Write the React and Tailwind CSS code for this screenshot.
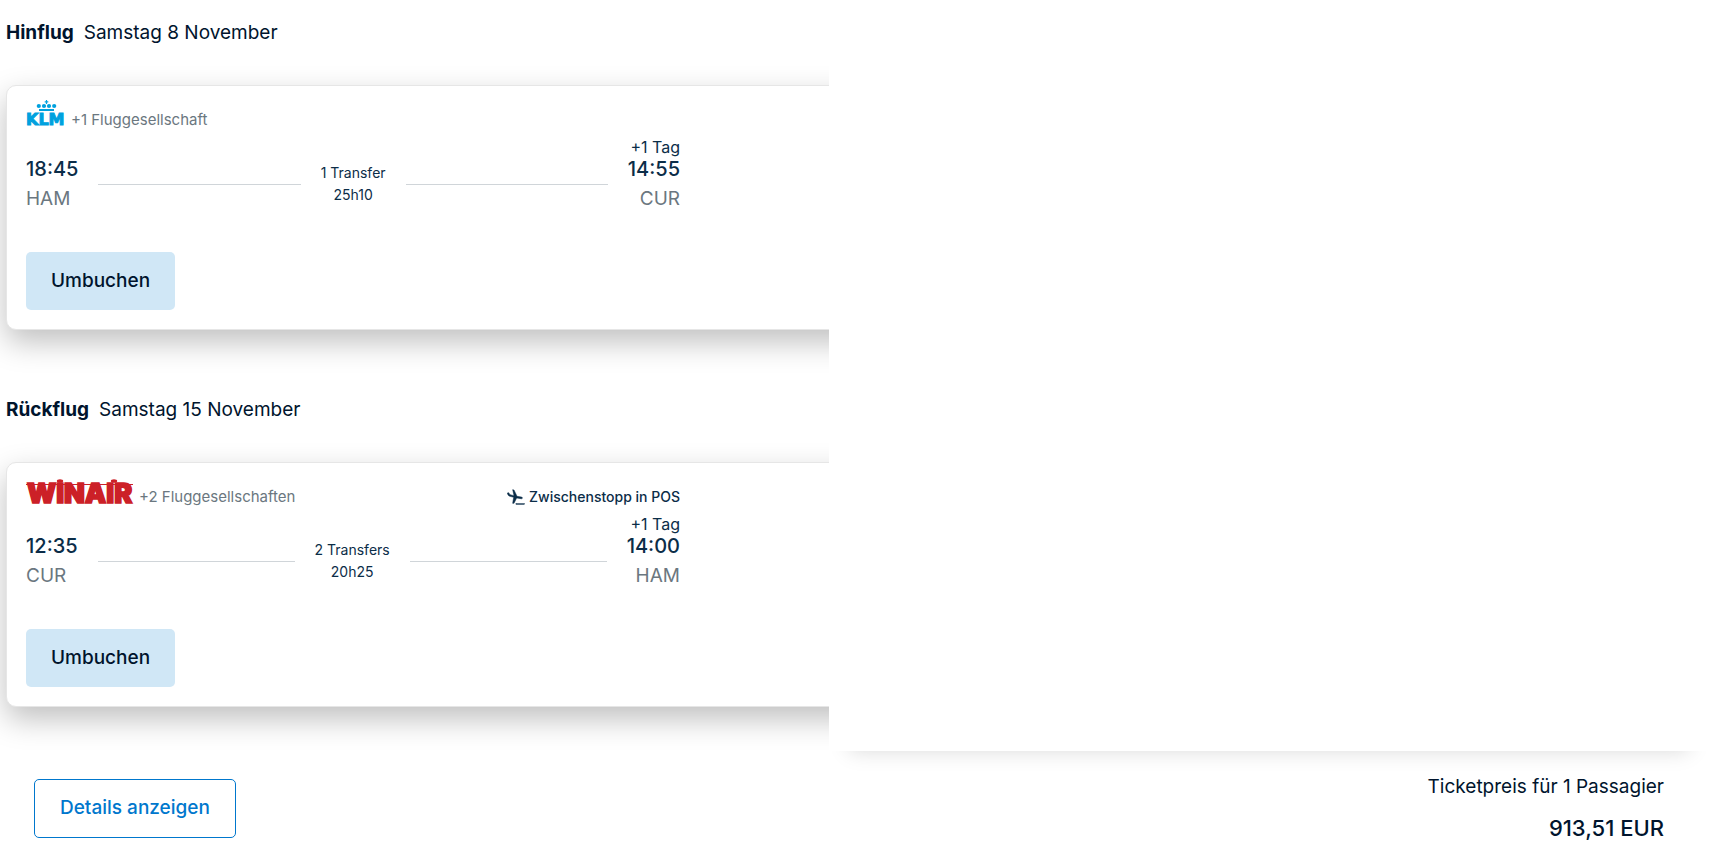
import React from 'react';

const KlmLogo = () => (
  <svg width="41" height="25" viewBox="0 0 41 25" fill="#00a1de" role="img" aria-label="KLM" className="flex-shrink-0 overflow-visible">
    <rect x="13" y="9" width="15" height="2" />
    <circle cx="12.8" cy="6" r="2.1" />
    <circle cx="18" cy="6" r="2.1" />
    <circle cx="23" cy="6" r="2.1" />
    <circle cx="28.2" cy="6" r="2.1" />
    <path d="M19.9 0h1.2v1.2h1.2v1.2h-1.2V4h-1.2V2.4h-1.2V1.2h1.2z" />
    <text x="0" y="25" fontFamily="DejaVu Sans" fontWeight="700" fontSize="16" stroke="#00a1de" strokeWidth="1">KLM</text>
  </svg>
);

const WinairLogo = () => (
  <svg width="109" height="25" viewBox="0 -2 109 25" fill="#cc2027" role="img" aria-label="Winair" className="flex-shrink-0 overflow-visible">
    <text x="1" y="24" fontFamily="Inter" fontWeight="900" fontSize="27" stroke="#cc2027" strokeWidth="1.6">WINAIR</text>
    <rect x="0" y="5" width="107" height="1" />
    <ellipse cx="34" cy="2" rx="3.2" ry="1.8" />
    <ellipse cx="88" cy="2" rx="3.2" ry="1.8" />
  </svg>
);

const StopoverIcon = () => (
  <svg width="18" height="16" viewBox="0 0 54 48" fill="#0b2d48" stroke="#0b2d48" strokeWidth="1.5" aria-hidden="true" className="flex-shrink-0">
    <path d="M1 12l4-1 4 6 12 3L17 2l4 1 9 19 13 2q4 1 3 4-1 2-4 1l-13-2-8 16h-4l3-18-14-4q-4-3-5-9z" />
    <rect x="27" y="44" width="25" height="2" />
  </svg>
);

const flights = [
  {
    title: 'Hinflug',
    date: 'Samstag 8 November',
    Logo: KlmLogo,
    airlines: '+1 Fluggesellschaft',
    departure: { time: '18:45', airport: 'HAM' },
    arrival: { time: '14:55', airport: 'CUR', day: '+1 Tag' },
    transfers: '1 Transfer',
    duration: '25h10',
  },
  {
    title: 'Rückflug',
    date: 'Samstag 15 November',
    Logo: WinairLogo,
    airlines: '+2 Fluggesellschaften',
    stopover: 'Zwischenstopp in POS',
    departure: { time: '12:35', airport: 'CUR' },
    arrival: { time: '14:00', airport: 'HAM', day: '+1 Tag' },
    transfers: '2 Transfers',
    duration: '20h25',
  },
];

const FlightCard = ({ flight }) => {
  const { Logo, departure, arrival } = flight;

  return (
    <section>
      <h2 className="flex gap-[10px] text-[19px] leading-8 text-[#00142d]">
        <span className="font-bold">{flight.title}</span>
        <span>{flight.date}</span>
      </h2>

      <div className="mt-9 -mr-10 rounded-[10px] border border-[#e6e6e6] bg-white pt-[14px] pb-[19px] pl-[19px] shadow-[0_12px_30px_rgba(0,0,0,0.25)]">
        <div className="w-full max-w-[654px]">
          <div className="flex h-[30px] items-baseline gap-1">
            <Logo />
            <span className="text-[15px] leading-5 text-[#6b7780]">{flight.airlines}</span>
            {flight.stopover && (
              <span className="ml-auto flex items-center gap-1 self-end text-sm leading-5 font-medium text-[#0b2d48]">
                <StopoverIcon />
                {flight.stopover}
              </span>
            )}
          </div>

          <div className="mt-[7px] flex items-end gap-5 text-[#0b2d48]">
            <div>
              <p className="text-xl leading-6 font-medium">{departure.time}</p>
              <p className="mt-[6px] text-[19px] leading-6 text-[#6b7780]">{departure.airport}</p>
            </div>
            <div className="mb-[5px] flex flex-1 items-center gap-5">
              <div className="h-px flex-1 bg-[#d0d5d9]" />
              <div className="text-center text-sm leading-[22px]">
                <p>{flight.transfers}</p>
                <p>{flight.duration}</p>
              </div>
              <div className="h-px flex-1 bg-[#d0d5d9]" />
            </div>
            <div className="text-right">
              <p className="text-base leading-5">{arrival.day}</p>
              <p className="text-xl leading-6 font-medium">{arrival.time}</p>
              <p className="mt-[6px] text-[19px] leading-6 text-[#6b7780]">{arrival.airport}</p>
            </div>
          </div>

          <button type="button" className="mt-[41px] block rounded-[5px] bg-[#d0e7f6] px-[25px] py-4 text-[19px] leading-[26px] font-medium text-[#00142d]">
            Umbuchen
          </button>
        </div>
      </div>
    </section>
  );
};

const App = () => (
  <div className="min-h-screen bg-white font-['Inter',sans-serif]">
    <main className="flex">
      <div className="flex w-[48.5%] flex-col gap-16 overflow-hidden pt-[17px] pb-11 pl-[6px]">
        {flights.map((flight) => (
          <FlightCard key={flight.title} flight={flight} />
        ))}
      </div>
      <div className="flex-1 bg-white shadow-[0_20px_20px_-20px_rgba(0,0,0,0.15)]" />
    </main>

    <footer className="flex items-start justify-between pt-7 pr-[45px] pb-5 pl-[34px]">
      <button type="button" className="rounded-[5px] border border-[#0077cd] px-[25px] pt-[15px] pb-[17px] text-[19px] leading-[25px] font-medium text-[#0077cd]">
        Details anzeigen
      </button>
      <div className="text-right text-[#00142d]">
        <p className="text-[19px] leading-4">Ticketpreis für 1 Passagier</p>
        <p className="mt-[17px] text-[22px] leading-8 font-medium">913,51 EUR</p>
      </div>
    </footer>
  </div>
);

export default App;
